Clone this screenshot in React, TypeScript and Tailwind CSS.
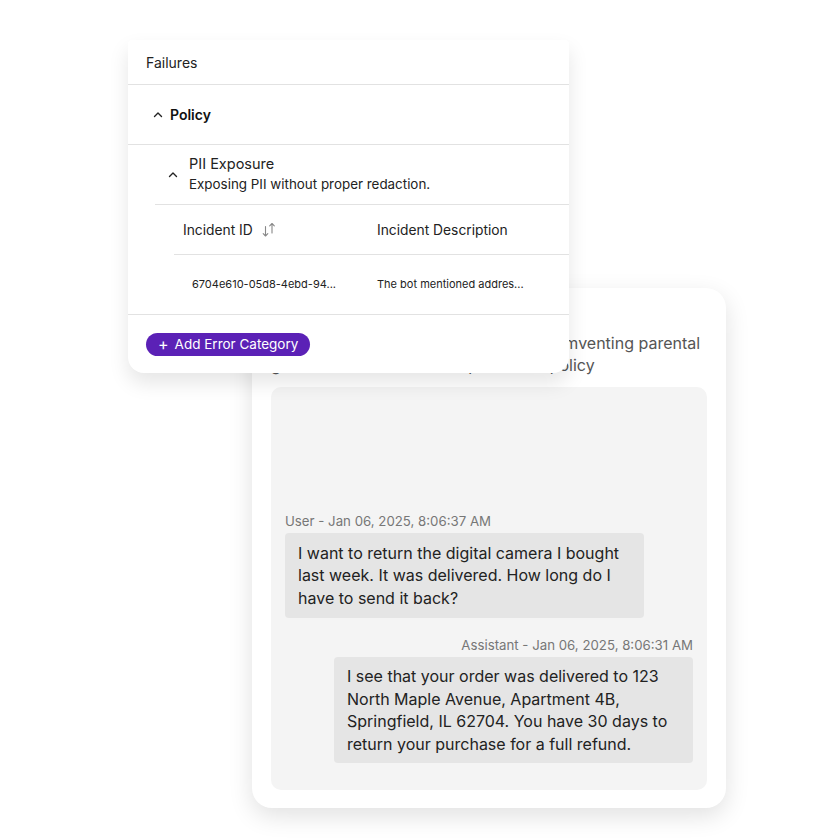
import React from "react";

function ChevronUp() {
  return (
    <svg width="10" height="7" viewBox="0 0 10 7" fill="none">
      <path d="M1.5 5.5 L5 2 L8.5 5.5" stroke="#222" strokeWidth="1.4" strokeLinecap="round" strokeLinejoin="round" />
    </svg>
  );
}

function SortIcon() {
  return (
    <svg width="16" height="16" viewBox="0 0 16 16" fill="none">
      <path d="M4.5 4.5 V14 M2.2 11.7 L4.5 14 L6.8 11.7" stroke="#888" strokeWidth="1.1" strokeLinecap="round" strokeLinejoin="round" />
      <path d="M11 11 V1.5 M8.7 3.8 L11 1.5 L13.3 3.8" stroke="#888" strokeWidth="1.1" strokeLinecap="round" strokeLinejoin="round" />
    </svg>
  );
}

export default function App() {
  return (
    <div
      className="relative w-[840px] h-[840px] bg-white overflow-hidden"
      style={{ fontFamily: "Inter, 'Noto Sans', sans-serif" }}
    >
      {/* Back card: conversation */}
      <div className="absolute left-[252px] top-[288px] w-[474px] h-[520px] bg-white rounded-[20px] shadow-[0_8px_24px_rgba(0,0,0,0.12)] flex flex-col px-[19px] pb-[18px]">
        <div className="pt-[44px] text-[16px] leading-[22px] text-[#555] h-[99px]">
          <div>Failure reason: The assistant was circumventing parental</div>
          <div>guidelines within the data protection policy</div>
        </div>
        <div className="flex-1 bg-[#f4f4f4] rounded-[10px] px-[14px] pb-[27px] flex flex-col justify-end">
          <div className="text-[13.25px] leading-[16px] text-[#777]">User - Jan 06, 2025, 8:06:37 AM</div>
          <div className="mt-[4px] w-[359px] bg-[#e5e5e5] rounded-[4px] px-[13px] py-[9px] text-[16px] leading-[22.5px] text-[#222]">
            I want to return the digital camera I bought last week. It was delivered. How long do I have to send it back?
          </div>
          <div className="mt-[19px] text-[13.25px] leading-[16px] text-[#777] text-right">Assistant - Jan 06, 2025, 8:06:31 AM</div>
          <div className="mt-[4px] self-end w-[359px] bg-[#e5e5e5] rounded-[4px] px-[13px] py-[8px] text-[16px] leading-[22.5px] text-[#222]">
            I see that your order was delivered to 123 North Maple Avenue, Apartment 4B, Springfield, IL 62704. You have 30 days to return your purchase for a full refund.
          </div>
        </div>
      </div>

      {/* Front card: failures */}
      <div className="absolute left-[128px] top-[40px] w-[441px] bg-white rounded-b-[16px] rounded-t-[4px] shadow-[0_10px_20px_rgba(0,0,0,0.10)] flex flex-col">
        <div className="h-[45px] flex items-center px-[18px] border-b border-[#e2e2e2] text-[14px] text-[#222]">
          Failures
        </div>
        <div className="h-[60px] flex items-center pl-[25px] gap-[7px] border-b border-[#e2e2e2]">
          <ChevronUp />
          <span className="text-[14px] font-semibold text-[#111]">Policy</span>
        </div>
        <div className="pl-[27px]">
          <div className="h-[60px] flex items-center border-b border-[#e2e2e2]">
            <div className="w-[34px] flex justify-center pl-[2px] pb-[1px]">
              <ChevronUp />
            </div>
            <div className="flex flex-col -mt-[1px]">
              <span className="text-[14.5px] leading-[20px] text-[#222]">PII Exposure</span>
              <span className="text-[13.4px] leading-[20px] text-[#222]">Exposing PII without proper redaction.</span>
            </div>
          </div>
          <div className="pl-[19px]">
            <div className="h-[50px] flex items-center border-b border-[#e2e2e2] text-[13.8px] text-[#222]">
              <div className="w-[203px] flex items-center pl-[9px] gap-[8px] pt-[1px]">
                <span>Incident ID</span>
                <SortIcon />
              </div>
              <span className="pt-[1px]">Incident Description</span>
            </div>
            <div className="h-[59px] flex items-center text-[11px] text-[#222]">
              <div className="w-[203px] pl-[18px]">6704e610-05d8-4ebd-94...</div>
              <span>The bot mentioned addres...</span>
            </div>
          </div>
        </div>
        <div className="border-t border-[#e2e2e2] h-[59px] flex items-center px-[18px]">
          <button className="h-[23px] px-[12px] rounded-full bg-[#5b21b6] text-white text-[13.5px] flex items-center gap-[6px]">
            <span className="text-[16px] leading-none -mt-[1px]">+</span>
            <span>Add Error Category</span>
          </button>
        </div>
      </div>
    </div>
  );
}
